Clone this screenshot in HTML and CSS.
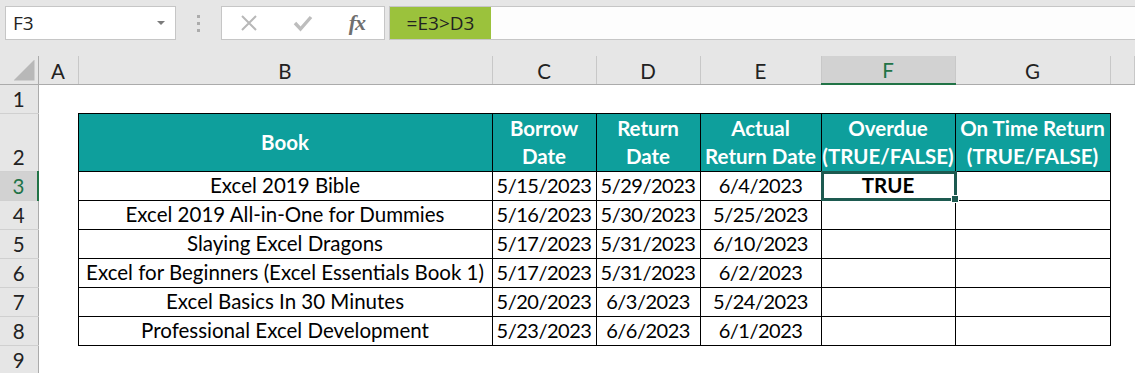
FILE: index.html
```html
<!DOCTYPE html>
<html lang="en">
<head>
    <meta charset="UTF-8">
    <title>Overdue check - Excel</title>
    <link rel="stylesheet" href="styles.css">
</head>
<body>
    <!-- Barra de fórmulas -->
    <div class="formula-bar">
        <div class="name-box">
            <span>F3</span>
            <span class="arrow"></span>
        </div>
        <div class="grip"><i></i><i></i><i></i></div>
        <div class="buttons">
            <svg class="btn-icon" width="18" height="18" viewBox="0 0 18 18">
                <path d="M2 2 L16 16 M16 2 L2 16" stroke="#b8b8b8" stroke-width="2" fill="none"/>
            </svg>
            <svg class="btn-icon" width="20" height="18" viewBox="0 0 20 18">
                <path d="M2 9 L7.5 15 L18 3" stroke="#bdbdbd" stroke-width="3.4" fill="none"/>
            </svg>
            <span class="fx">fx</span>
        </div>
        <div class="formula">
            <span class="formula-text">=E3&gt;D3</span>
        </div>
    </div>

    <!-- Hoja -->
    <table class="sheet">
        <colgroup>
            <col style="width:38px">
            <col style="width:40px">
            <col style="width:414px">
            <col style="width:104px">
            <col style="width:104px">
            <col style="width:121px">
            <col style="width:134px">
            <col style="width:155px">
            <col>
        </colgroup>
        <tr class="col-heads">
            <th class="corner"><span class="tri"></span></th>
            <th>A</th>
            <th>B</th>
            <th>C</th>
            <th>D</th>
            <th>E</th>
            <th class="active-col">F</th>
            <th>G</th>
            <th></th>
        </tr>
        <tr class="r1">
            <th class="row-head">1</th>
            <td></td><td></td><td></td><td></td><td></td><td></td><td></td><td></td>
        </tr>
        <tr class="r2">
            <th class="row-head">2</th>
            <td></td>
            <td class="hd">Book</td>
            <td class="hd">Borrow<br>Date</td>
            <td class="hd">Return<br>Date</td>
            <td class="hd">Actual<br>Return Date</td>
            <td class="hd">Overdue<br>(TRUE/FALSE)</td>
            <td class="hd">On Time Return<br>(TRUE/FALSE)</td>
            <td></td>
        </tr>
        <tr>
            <th class="row-head active-row">3</th>
            <td></td>
            <td class="c">Excel 2019 Bible</td>
            <td class="c d">5/15/2023</td>
            <td class="c d">5/29/2023</td>
            <td class="c d">6/4/2023</td>
            <td class="c selected"><b>TRUE</b><span class="sel-box"><span class="handle"></span></span></td>
            <td class="c"></td>
            <td></td>
        </tr>
        <tr>
            <th class="row-head">4</th>
            <td></td>
            <td class="c">Excel 2019 All-in-One for Dummies</td>
            <td class="c d">5/16/2023</td>
            <td class="c d">5/30/2023</td>
            <td class="c d">5/25/2023</td>
            <td class="c"></td>
            <td class="c"></td>
            <td></td>
        </tr>
        <tr>
            <th class="row-head">5</th>
            <td></td>
            <td class="c">Slaying Excel Dragons</td>
            <td class="c d">5/17/2023</td>
            <td class="c d">5/31/2023</td>
            <td class="c d">6/10/2023</td>
            <td class="c"></td>
            <td class="c"></td>
            <td></td>
        </tr>
        <tr>
            <th class="row-head">6</th>
            <td></td>
            <td class="c">Excel for Beginners (Excel Essentials Book 1)</td>
            <td class="c d">5/17/2023</td>
            <td class="c d">5/31/2023</td>
            <td class="c d">6/2/2023</td>
            <td class="c"></td>
            <td class="c"></td>
            <td></td>
        </tr>
        <tr>
            <th class="row-head">7</th>
            <td></td>
            <td class="c">Excel Basics In 30 Minutes</td>
            <td class="c d">5/20/2023</td>
            <td class="c d">6/3/2023</td>
            <td class="c d">5/24/2023</td>
            <td class="c"></td>
            <td class="c"></td>
            <td></td>
        </tr>
        <tr>
            <th class="row-head">8</th>
            <td></td>
            <td class="c">Professional Excel Development</td>
            <td class="c d">5/23/2023</td>
            <td class="c d">6/6/2023</td>
            <td class="c d">6/1/2023</td>
            <td class="c"></td>
            <td class="c"></td>
            <td></td>
        </tr>
        <tr>
            <th class="row-head">9</th>
            <td></td><td></td><td></td><td></td><td></td><td></td><td></td><td></td>
        </tr>
    </table>
</body>
</html>
```

FILE: styles.css
```css
body {
    margin: 0;
    background: #fff;
    font-family: Lato, "Liberation Sans", sans-serif;
    overflow: hidden;
    width: 1135px;
    height: 373px;
}

/* Barra de fórmulas */
.formula-bar {
    height: 56px;
    box-sizing: border-box;
    background: #e6e6e6;
    padding: 6px 0 0 5px;
    display: flex;
    align-items: flex-start;
}

.name-box {
    width: 171px;
    height: 34px;
    box-sizing: border-box;
    background: #fff;
    border: 1px solid #c6c6c6;
    display: flex;
    align-items: center;
    justify-content: space-between;
    padding: 0 10px 0 7px;
    font-family: "Open Sans", sans-serif;
    font-size: 19px;
    color: #222;
}

.arrow {
    width: 0;
    height: 0;
    border-left: 4px solid transparent;
    border-right: 4px solid transparent;
    border-top: 4px solid #7b7b7b;
}

.grip {
    width: 45px;
    display: flex;
    flex-direction: column;
    align-items: center;
    gap: 4px;
    padding-top: 9px;
}

.grip i {
    width: 3px;
    height: 3px;
    background: #acacac;
}

.buttons {
    width: 164px;
    height: 34px;
    box-sizing: border-box;
    background: #fff;
    border: 1px solid #c6c6c6;
    display: flex;
    align-items: center;
    justify-content: space-between;
    padding: 0 19px 0 18px;
}

.fx {
    font-family: "Liberation Serif", serif;
    font-style: italic;
    font-weight: bold;
    font-size: 22px;
    color: #6f6f6f;
    letter-spacing: -1px;
}

.formula {
    flex: 1;
    height: 34px;
    box-sizing: border-box;
    margin-left: 4px;
    margin-right: -2px;
    background: #fdfdfd;
    border: 1px solid #c6c6c6;
    display: flex;
}

.formula-text {
    width: 101px;
    background: #9bc23c;
    display: flex;
    align-items: center;
    justify-content: center;
    font-family: "Open Sans", sans-serif;
    font-size: 19px;
    color: #222;
}

/* Hoja */
.sheet {
    border-collapse: collapse;
    table-layout: fixed;
    width: 1135px;
    font-size: 20.5px;
    color: #000;
}

.sheet th,
.sheet td {
    padding: 0;
    white-space: nowrap;
    text-align: center;
}

.col-heads {
    height: 28px;
}

.col-heads th {
    background: #e6e6e6;
    font-weight: normal;
    color: #222;
    border-right: 1px solid #c8c8c8;
    border-bottom: 1px solid #ababab;
    vertical-align: bottom;
    padding-bottom: 1px;
}

.col-heads th.corner {
    position: relative;
    border-right: 1px solid #ababab;
}

.tri {
    position: absolute;
    right: 3px;
    bottom: 3px;
    width: 21px;
    height: 21px;
    background: #b8b8b8;
    clip-path: polygon(100% 0, 100% 100%, 0 100%);
}

.col-heads th.active-col {
    background: #d2d2d2;
    color: #217346;
    border-bottom: 2px solid #217346;
}

tr {
    height: 29px;
}

tr.r2 {
    height: 58px;
}

.row-head {
    background: #e6e6e6;
    font-weight: normal;
    color: #222;
    border-right: 1px solid #ababab;
    border-bottom: 1px solid #d0d0d0;
    vertical-align: bottom;
    line-height: 27px;
}

.row-head.active-row {
    background: #d2d2d2;
    color: #217346;
    border-right: 2px solid #217346;
}

.hd {
    background: #0e9f9c;
    color: #fff;
    font-weight: bold;
    line-height: 28px;
    border: 1px solid #000;
    vertical-align: middle;
}

.c {
    border: 1px solid #000;
    vertical-align: middle;
    line-height: 27px;
}

.d {
    font-size: 20px;
    letter-spacing: -0.5px;
}

.selected {
    position: relative;
}

.sel-box {
    position: absolute;
    left: -1px;
    top: -1px;
    right: -2px;
    bottom: -1px;
    border: 3px solid #1d5a50;
}

.handle {
    position: absolute;
    right: -5px;
    bottom: -5px;
    width: 6px;
    height: 6px;
    background: #1d5a50;
    border: 1px solid #fff;
}
```
